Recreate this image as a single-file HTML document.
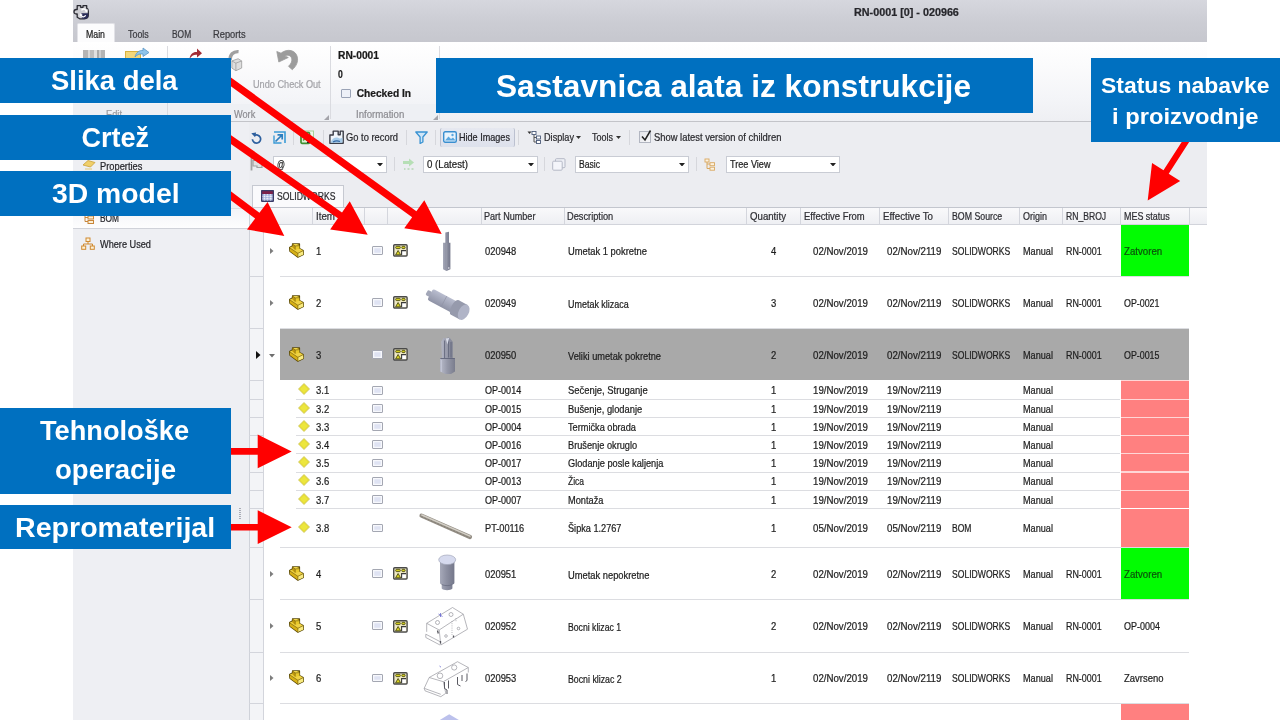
<!DOCTYPE html>
<html><head><meta charset="utf-8"><title>Sastavnica alata iz konstrukcije</title>
<style>
html,body{margin:0;padding:0;background:#fff;}
body{width:1280px;height:720px;overflow:hidden;position:relative;font-family:"Liberation Sans",sans-serif;}
#pg{position:absolute;left:0;top:0;width:1280px;height:720px;overflow:hidden;background:#fff;will-change:transform;}
#pg div,#pg span,#pg svg{position:absolute;}
.t{white-space:nowrap;transform-origin:0 50%;-webkit-text-stroke:.22px;}
.b{-webkit-text-stroke:0;}
.bl{background:#0070c0;}
.ln{background:#dcdde1;}
</style></head><body><div id="pg">

<div style="left:73px;top:0px;width:1134px;height:720px;background:#ecedf1;"></div>
<div style="left:73px;top:0px;width:1134px;height:42.4px;background:linear-gradient(#d6d7de,#cccdd4 50%,#c6c7ce);"></div>
<div style="left:73px;top:41.6px;width:1134px;height:1px;background:#b4b5bc;"></div>
<svg style="left:73px;top:3px;" width="17" height="17" viewBox="0 0 17 17"><path d="M4.200 2.600h3.500v1.700h2.300v-1.700h3.700v2.600c1.300.4 1.600 1.600 1.600 3v4c0 2.300-1.600 3.300-4 3.600h-4.600l-2.500-1.600v-3.200h-.9c-1.600 0-2.300-.9-2.300-2.200s.7-2.300 2.300-2.300h.9z" fill="#cdcdd2" stroke="#2b2b33" stroke-width="1.300" stroke-linejoin="round"/><path d="M8.500 10.200h6.700v3c0 1.700-1.400 2.400-3.400 2.600h-2.300c-1-1.500-1.400-3.600-1-5.600z" fill="#2a2c58"/><path d="M8 7.200a3 3 0 0 1 5.400-.3l1.300-.6-.3 3.200-3-1.600 1-.5a2 2 0 0 0-3.200.300z" fill="#fff"/><path d="M13.200 12.600a3 3 0 0 1-5.400.3l-1.200.7.300-3.400 3 1.700-1.100.5a2 2 0 0 0 3.300-.300z" fill="#fff"/></svg>
<span class="t" style="left:853.50px;top:5.87px;font-size:10.2px;line-height:13px;color:#26262b;font-weight:bold;transform:scaleX(1.0582);">RN-0001 [0] - 020966</span>
<div style="left:76.5px;top:23.2px;width:38px;height:20px;background:#fcfcfd;border:1px solid #e2e2e7;border-bottom:none;box-sizing:border-box;border-radius:2px 2px 0 0;"></div>
<span class="t" style="left:85.70px;top:27.97px;font-size:10.2px;line-height:13px;color:#1c1c1c;transform:scaleX(0.8594);">Main</span>
<span class="t" style="left:127.90px;top:27.97px;font-size:10.2px;line-height:13px;color:#3a3a3f;transform:scaleX(0.8735);">Tools</span>
<span class="t" style="left:171.60px;top:27.97px;font-size:10.2px;line-height:13px;color:#3a3a3f;transform:scaleX(0.8264);">BOM</span>
<span class="t" style="left:213.40px;top:27.97px;font-size:10.2px;line-height:13px;color:#3a3a3f;transform:scaleX(0.9128);">Reports</span>
<div style="left:73px;top:42.4px;width:1134px;height:79px;background:linear-gradient(#ffffff,#fbfbfc 30%,#f4f5f8 70%,#eeeff3);"></div>
<div style="left:73px;top:104px;width:366px;height:17px;background:#eef0f4;"></div>
<div style="left:73px;top:120.5px;width:1134px;height:1px;background:#c3c4c9;"></div>
<div style="left:167.4px;top:46px;width:1px;height:73px;background:#dadbe0;"></div>
<div style="left:330px;top:46px;width:1px;height:73px;background:#dadbe0;"></div>
<div style="left:439px;top:46px;width:1px;height:73px;background:#dadbe0;"></div>
<div style="left:82.5px;top:49.5px;width:22.5px;height:16px;background:linear-gradient(90deg,#b4b4b4 0,#b4b4b4 22%,#d9d9d9 22%,#d9d9d9 30%,#bdbdbd 30%,#bdbdbd 48%,#e0e0e0 48%,#e0e0e0 62%,#a9a9a9 62%,#a9a9a9 72%,#cfcfcf 72%,#cfcfcf 80%,#b4b4b4 80%);"></div>
<div style="left:125px;top:51px;width:16px;height:12px;background:#f3d77a;border:1px solid #d9b23e;box-sizing:border-box;"></div>
<svg style="left:134px;top:47px;" width="16" height="12" viewBox="0 0 16 12"><path d="M1 10c1-5 5-7 8-6.5V1l6 4.5-6 4V7c-3-.5-6 .5-8 3z" fill="#8fc4ea" stroke="#5b97c7" stroke-width=".8"/></svg>
<svg style="left:188px;top:47px;" width="15" height="14" viewBox="0 0 15 14"><path d="M1.5 12c.5-5 4-7.5 7.5-7V1.5l5 4.7-5 4.3V7.8c-3-.4-5.6 1-7.500 4.200z" fill="#a32c34"/></svg>
<svg style="left:226.5px;top:47.8px;" width="16" height="25" viewBox="0 0 18 28"><path d="M3.500 14c-.5-6.500 3.500-10.500 9.500-10" fill="none" stroke="#a0a0a0" stroke-width="3.800"/><path d="M5.500 14.500l7-2.500 4 2.500v8l-6.500 3-4.500-3z" fill="#dedede" stroke="#9c9c9c" stroke-width=".9"/><path d="M5.500 14.500l4.500 2.500 6.500-2.500M10 17v8.500" fill="none" stroke="#9c9c9c" stroke-width=".9"/></svg>
<svg style="left:276px;top:49px;" width="24" height="22" viewBox="0 0 24 22"><path d="M.800 2.500l2 10.500 9.500-4.500-3.500-1.600c2.600-1.600 6.400-.6 7 3 .4 2.700-1 5.200-3.300 7.400l3.800 3.400c4.200-3.600 6-8.200 5-12.600C20 1.200 11.500-1 5 4.200z" fill="#9c9c9c" stroke="#9c9c9c" stroke-width=".800" stroke-linejoin="round"/></svg>
<span class="t" style="left:253.20px;top:77.87px;font-size:10.2px;line-height:13px;color:#a3a3a8;transform:scaleX(0.8985);">Undo Check Out</span>
<span class="t" style="left:105.50px;top:107.67px;font-size:10.2px;line-height:13px;color:#9a9a9e;transform:scaleX(0.9103);">Edit</span>
<span class="t" style="left:233.70px;top:107.67px;font-size:10.2px;line-height:13px;color:#8d8d92;transform:scaleX(0.9021);">Work</span>
<span class="t" style="left:355.70px;top:107.57px;font-size:10.2px;line-height:13px;color:#8d8d92;transform:scaleX(0.9466);">Information</span>
<svg style="left:161px;top:114.5px;" width="5" height="5" viewBox="0 0 5 5"><path d="M5 0v5H0z" fill="#a4a4aa"/></svg>
<svg style="left:323.5px;top:114.5px;" width="5" height="5" viewBox="0 0 5 5"><path d="M5 0v5H0z" fill="#a4a4aa"/></svg>
<svg style="left:433px;top:114.5px;" width="5" height="5" viewBox="0 0 5 5"><path d="M5 0v5H0z" fill="#a4a4aa"/></svg>
<span class="t" style="left:338.00px;top:48.97px;font-size:10.2px;line-height:13px;color:#1a1a1a;font-weight:bold;transform:scaleX(1.0044);">RN-0001</span>
<span class="t" style="left:338.00px;top:67.67px;font-size:10.2px;line-height:13px;color:#1a1a1a;font-weight:bold;transform:scaleX(0.8461);">0</span>
<div style="left:340.5px;top:88.8px;width:10px;height:8.8px;background:#eef1f8;border:1px solid #9aa3b6;box-sizing:border-box;border-radius:1px;"></div>
<span class="t" style="left:356.70px;top:87.27px;font-size:10.2px;line-height:13px;color:#1a1a1a;font-weight:bold;">Checked In</span>
<svg style="left:250.5px;top:131.5px;" width="11" height="12" viewBox="0 0 11 12"><path d="M3.200 3.600A4.100 4.100 0 1 1 1.400 7.200" fill="none" stroke="#2d5f9e" stroke-width="1.7"/><path d="M0.300 1.200l4.800-.6-1 4.600z" fill="#2d5f9e"/></svg>
<svg style="left:272.5px;top:131px;" width="13" height="13" viewBox="0 0 13 13"><path d="M1 1h11v11" fill="none" stroke="#3a9bd6" stroke-width="1.6"/><path d="M1 4.500v7.500h7.500" fill="none" stroke="#3a9bd6" stroke-width="1.4"/><path d="M2.500 10.500l6-6M4.500 3.800h4.700v4.700" fill="none" stroke="#2b7fc0" stroke-width="1.7"/></svg>
<div style="left:293px;top:129.5px;width:1px;height:15px;background:#d6d7dc;"></div>
<svg style="left:300px;top:129.5px;" width="15" height="15" viewBox="0 0 15 15"><rect x="4.500" y="1" width="9" height="8.500" fill="#eef6ea" stroke="#a8d09a" stroke-width="1"/><rect x="1" y="2.500" width="8.500" height="10.800" rx="1" fill="#dff0d6" stroke="#3f8f32" stroke-width="1.700"/><path d="M3.200 5.500l4 5M7.200 5.500l-4 5" stroke="#4d9a3e" stroke-width="1.300"/><rect x="7" y="11.500" width="3" height="1.500" fill="#222"/></svg>
<div style="left:323px;top:129.5px;width:1px;height:15px;background:#d6d7dc;"></div>
<svg style="left:329px;top:129.5px;" width="15" height="14.5" viewBox="0 0 15 14.5"><path d="M.900 13.300v-8.300h3.300v-3.900h5v3.600h2v-3.600h3v12.200z" fill="#f1f6fb" stroke="#3a3c46" stroke-width="1.400" stroke-linejoin="round"/><path d="M1.500 12.800c1.500-4.500 5-6.200 8-4.800 1.600.8 2.500 1 3.900-.5v5.300z" fill="#a9cdea"/><path d="M4 12c2-1.200 4.500-1.500 7-.5" stroke="#2f66a3" stroke-width="1.300" fill="none"/></svg>
<span class="t" style="left:346.00px;top:131.27px;font-size:10.2px;line-height:13px;color:#2a2a2e;transform:scaleX(0.9172);">Go to record</span>
<div style="left:406px;top:129.5px;width:1px;height:15px;background:#d6d7dc;"></div>
<svg style="left:414.5px;top:131px;" width="13" height="13" viewBox="0 0 13 13"><path d="M.8 1h11.400l-4.300 5v5l-2.800 1.500v-6.500z" fill="#cfe6f8" stroke="#3a93d2" stroke-width="1.3" stroke-linejoin="round"/></svg>
<div style="left:435px;top:129.5px;width:1px;height:15px;background:#d6d7dc;"></div>
<div style="left:439.5px;top:127.5px;width:75px;height:19px;background:linear-gradient(#e6e8f0,#dde1ec);border-left:1px solid #bcc1d0;border-right:1px solid #bcc1d0;box-sizing:border-box;border-radius:2px;"></div>
<svg style="left:442.5px;top:131px;" width="14" height="12" viewBox="0 0 14 12"><rect x=".7" y=".7" width="12.600" height="10.600" rx="1.500" fill="#e8f3fc" stroke="#3a8fd0" stroke-width="1.4"/><path d="M2 9.500l3.500-4 2.500 2.500 2-1.500 2.500 3z" fill="#5aa7e0"/><circle cx="9.500" cy="4" r="1.200" fill="#5aa7e0"/></svg>
<span class="t" style="left:459.00px;top:131.27px;font-size:10.2px;line-height:13px;color:#26262b;transform:scaleX(0.8907);">Hide Images</span>
<div style="left:517.5px;top:129.5px;width:1px;height:15px;background:#d6d7dc;"></div>
<svg style="left:526.5px;top:129.5px;" width="15" height="15" viewBox="0 0 15 15"><path d="M.5 1.500h4l-2 2.500z" fill="#333"/><path d="M7 3.500v8.500h3M7 7.500h3" fill="none" stroke="#555" stroke-width="1"/><rect x="5" y="1.500" width="4" height="3" fill="#fff" stroke="#4a5a78" stroke-width=".9"/><rect x="9.500" y="6" width="4" height="3" fill="#fff" stroke="#4a5a78" stroke-width=".9"/><rect x="9.500" y="10.500" width="4" height="3" fill="#fff" stroke="#4a5a78" stroke-width=".9"/></svg>
<span class="t" style="left:544.00px;top:131.27px;font-size:10.2px;line-height:13px;color:#2a2a2e;transform:scaleX(0.8970);">Display</span>
<svg style="left:576.3px;top:136px;" width="5" height="3" viewBox="0 0 5 3"><path d="M0 0h5l-2.500 3z" fill="#333"/></svg>
<span class="t" style="left:592.00px;top:131.27px;font-size:10.2px;line-height:13px;color:#2a2a2e;transform:scaleX(0.8819);">Tools</span>
<svg style="left:615.5px;top:136px;" width="5" height="3" viewBox="0 0 5 3"><path d="M0 0h5l-2.500 3z" fill="#333"/></svg>
<div style="left:629px;top:129.5px;width:1px;height:15px;background:#d6d7dc;"></div>
<div style="left:639px;top:131px;width:12px;height:12px;background:linear-gradient(135deg,#e4e5ea,#f7f7f9);border:1px solid #b2b6c1;box-sizing:border-box;"></div>
<svg style="left:639px;top:129px;" width="14" height="14" viewBox="0 0 14 14"><path d="M3 7.500l3 3.500 5.500-9.500" fill="none" stroke="#222" stroke-width="1.500"/></svg>
<span class="t" style="left:654.00px;top:131.27px;font-size:10.2px;line-height:13px;color:#2a2a2e;transform:scaleX(0.9217);">Show latest version of children</span>
<svg style="left:249.5px;top:157px;" width="14" height="14" viewBox="0 0 14 14"><path d="M1.500 .500v13" stroke="#a2a2a2" stroke-width="1.800"/><path d="M3 3.500h4.500v1.500h4.500v5.500h-5v-1.500h-4z" fill="#e0e0e0" stroke="#a0a0a0" stroke-width="1.200"/></svg>
<div style="left:272.5px;top:155.7px;width:114.5px;height:17px;background:#fff;border:1px solid #c9ccd4;box-sizing:border-box;"></div>
<span class="t" style="left:276.50px;top:157.97px;font-size:10.2px;line-height:13px;color:#1e1e1e;transform:scaleX(0.7726);">@</span>
<svg style="left:377px;top:162.7px;" width="6" height="3.5" viewBox="0 0 6 3.5"><path d="M0 0h6l-3 3.500z" fill="#222"/></svg>
<div style="left:393.5px;top:157px;width:1px;height:14px;background:#d6d7dc;"></div>
<svg style="left:402px;top:157px;" width="14" height="14" viewBox="0 0 14 14"><path d="M1 4h6v-2.500l5 4-5 4v-2.500h-6z" fill="#a9dba6" opacity=".8"/><path d="M2 12h1.500M5.500 12h2M9.500 12h2" stroke="#b4d6b4" stroke-width="1.400"/></svg>
<div style="left:423px;top:155.7px;width:114.5px;height:17px;background:#fff;border:1px solid #c9ccd4;box-sizing:border-box;"></div>
<span class="t" style="left:427.00px;top:157.97px;font-size:10.2px;line-height:13px;color:#1e1e1e;transform:scaleX(0.9516);">0 (Latest)</span>
<svg style="left:527.5px;top:162.7px;" width="6" height="3.5" viewBox="0 0 6 3.5"><path d="M0 0h6l-3 3.500z" fill="#222"/></svg>
<div style="left:543.5px;top:157px;width:1px;height:14px;background:#d6d7dc;"></div>
<svg style="left:552px;top:157.5px;" width="14" height="13" viewBox="0 0 14 13"><rect x="3.500" y=".7" width="9.500" height="9" rx="1" fill="#eef0f6" stroke="#b4b8c6" stroke-width="1"/><rect x=".7" y="3.200" width="9.500" height="9" rx="1" fill="#f4f5fa" stroke="#b4b8c6" stroke-width="1"/></svg>
<div style="left:574.5px;top:155.7px;width:114.5px;height:17px;background:#fff;border:1px solid #c9ccd4;box-sizing:border-box;"></div>
<span class="t" style="left:578.50px;top:157.97px;font-size:10.2px;line-height:13px;color:#1e1e1e;transform:scaleX(0.8419);">Basic</span>
<svg style="left:679px;top:162.7px;" width="6" height="3.5" viewBox="0 0 6 3.5"><path d="M0 0h6l-3 3.500z" fill="#222"/></svg>
<div style="left:696px;top:157px;width:1px;height:14px;background:#d6d7dc;"></div>
<svg style="left:704px;top:157.5px;" width="12" height="13" viewBox="0 0 12 13"><path d="M3 3.500v7h3M3 6h3" fill="none" stroke="#d9a860" stroke-width="1"/><rect x="1" y="1" width="4" height="3" fill="#fdf3e0" stroke="#d9a860" stroke-width=".9"/><rect x="6" y="4.700" width="4.500" height="3" fill="#fdf3e0" stroke="#d9a860" stroke-width=".9"/><rect x="6" y="9.200" width="4.500" height="3" fill="#fdf3e0" stroke="#d9a860" stroke-width=".9"/></svg>
<div style="left:725.5px;top:155.7px;width:114.5px;height:17px;background:#fff;border:1px solid #c9ccd4;box-sizing:border-box;"></div>
<span class="t" style="left:729.50px;top:157.97px;font-size:10.2px;line-height:13px;color:#1e1e1e;transform:scaleX(0.8930);">Tree View</span>
<svg style="left:830px;top:162.7px;" width="6" height="3.5" viewBox="0 0 6 3.5"><path d="M0 0h6l-3 3.500z" fill="#222"/></svg>
<div style="left:73px;top:121.5px;width:176px;height:598.5px;background:#eeeff3;"></div>
<div style="left:248.5px;top:207px;width:1px;height:513px;background:#d2d4da;"></div>
<div style="left:73px;top:208px;width:175.5px;height:20.8px;background:linear-gradient(#f3f4f7,#fdfdfe);border-top:1px solid #dcdee4;border-bottom:1px solid #d0d2d9;box-sizing:border-box;"></div>
<svg style="left:82px;top:158px;" width="14" height="13" viewBox="0 0 14 13"><path d="M1 7l5-4.500 7 2-4.500 4.500z" fill="#f0cf6a" stroke="#c9a13a" stroke-width=".8"/><path d="M3 10h7v2h-7z" fill="#e8ddb5"/></svg>
<span class="t" style="left:99.70px;top:159.77px;font-size:10.2px;line-height:13px;color:#26262b;transform:scaleX(0.9142);">Properties</span>
<svg style="left:82px;top:211px;" width="13" height="13" viewBox="0 0 13 13"><path d="M3 3.500v7h3M3 6.500h3" fill="none" stroke="#c8863a" stroke-width="1"/><rect x="1" y="1" width="5" height="3.500" fill="#fdf0d6" stroke="#c8863a" stroke-width="1"/><rect x="6" y="5" width="5.500" height="3" fill="#fdf0d6" stroke="#c8863a" stroke-width="1"/><rect x="6" y="9.500" width="5.500" height="3" fill="#fdf0d6" stroke="#c8863a" stroke-width="1"/></svg>
<span class="t" style="left:99.70px;top:211.67px;font-size:10.2px;line-height:13px;color:#26262b;transform:scaleX(0.8178);">BOM</span>
<svg style="left:81px;top:237px;" width="14" height="13" viewBox="0 0 14 13"><path d="M7 4v3M2.500 9.500v-2.500h9v2.500" fill="none" stroke="#d08a30" stroke-width="1"/><rect x="5" y="1" width="4" height="3.500" fill="#fdf0d6" stroke="#d08a30" stroke-width="1"/><rect x=".7" y="9" width="4" height="3.300" fill="#fdf0d6" stroke="#d08a30" stroke-width="1"/><rect x="9.300" y="9" width="4" height="3.300" fill="#fdf0d6" stroke="#d08a30" stroke-width="1"/></svg>
<span class="t" style="left:99.70px;top:237.97px;font-size:10.2px;line-height:13px;color:#26262b;transform:scaleX(0.8997);">Where Used</span>
<div style="left:239px;top:508px;width:2px;height:1px;background:#a9acb6;"></div>
<div style="left:239px;top:510px;width:2px;height:1px;background:#a9acb6;"></div>
<div style="left:239px;top:512px;width:2px;height:1px;background:#a9acb6;"></div>
<div style="left:239px;top:514px;width:2px;height:1px;background:#a9acb6;"></div>
<div style="left:239px;top:516px;width:2px;height:1px;background:#a9acb6;"></div>
<div style="left:239px;top:518px;width:2px;height:1px;background:#a9acb6;"></div>
<div style="left:252px;top:185.2px;width:91.8px;height:22.5px;background:#fafafc;border:1px solid #c6c9d1;border-bottom:none;box-sizing:border-box;"></div>
<svg style="left:261.2px;top:189.8px;" width="13" height="12" viewBox="0 0 13 12"><rect x=".600" y=".600" width="11.800" height="10.800" rx=".800" fill="#a9b6de" stroke="#3c3c68" stroke-width="1.200"/><rect x=".600" y=".600" width="11.800" height="3.400" fill="#7c2049"/><path d="M3.500 4.200v7M6.500 4.200v7M9.500 4.200v7M1.200 6.400h10.600M1.200 8.800h10.600" stroke="#f4f6fc" stroke-width=".800" stroke-dasharray="1.200 .600"/><rect x=".600" y=".600" width="11.800" height="10.800" rx=".800" fill="none" stroke="#3c3c68" stroke-width="1.200"/></svg>
<span class="t" style="left:277.00px;top:190.07px;font-size:10.2px;line-height:13px;color:#2a2a2e;transform:scaleX(0.8461);">SOLIDWORKS</span>
<div style="left:249px;top:207px;width:958px;height:513px;background:#fff;"></div>
<div style="left:249px;top:207px;width:958px;height:17.5px;background:linear-gradient(#f9f9fb,#eeeff3);border-top:1px solid #c3c6ce;border-bottom:1px solid #d2d4db;box-sizing:border-box;"></div>
<div style="left:312px;top:208px;width:1px;height:15.5px;background:#d4d6dd;"></div>
<div style="left:363.5px;top:208px;width:1px;height:15.5px;background:#d4d6dd;"></div>
<div style="left:387px;top:208px;width:1px;height:15.5px;background:#d4d6dd;"></div>
<div style="left:480.5px;top:208px;width:1px;height:15.5px;background:#d4d6dd;"></div>
<div style="left:563.5px;top:208px;width:1px;height:15.5px;background:#d4d6dd;"></div>
<div style="left:745.5px;top:208px;width:1px;height:15.5px;background:#d4d6dd;"></div>
<div style="left:800px;top:208px;width:1px;height:15.5px;background:#d4d6dd;"></div>
<div style="left:879px;top:208px;width:1px;height:15.5px;background:#d4d6dd;"></div>
<div style="left:947.5px;top:208px;width:1px;height:15.5px;background:#d4d6dd;"></div>
<div style="left:1018.5px;top:208px;width:1px;height:15.5px;background:#d4d6dd;"></div>
<div style="left:1061.5px;top:208px;width:1px;height:15.5px;background:#d4d6dd;"></div>
<div style="left:1120px;top:208px;width:1px;height:15.5px;background:#d4d6dd;"></div>
<div style="left:1189px;top:208px;width:1px;height:15.5px;background:#d4d6dd;"></div>
<span class="t" style="left:316.00px;top:209.57px;font-size:10.2px;line-height:13px;color:#2e2e33;transform:scaleX(0.9578);">Item</span>
<span class="t" style="left:484.20px;top:209.57px;font-size:10.2px;line-height:13px;color:#2e2e33;transform:scaleX(0.8907);">Part Number</span>
<span class="t" style="left:566.70px;top:209.57px;font-size:10.2px;line-height:13px;color:#2e2e33;transform:scaleX(0.9075);">Description</span>
<span class="t" style="left:749.50px;top:209.57px;font-size:10.2px;line-height:13px;color:#2e2e33;transform:scaleX(0.9477);">Quantity</span>
<span class="t" style="left:804.20px;top:209.57px;font-size:10.2px;line-height:13px;color:#2e2e33;transform:scaleX(0.9273);">Effective From</span>
<span class="t" style="left:883.20px;top:209.57px;font-size:10.2px;line-height:13px;color:#2e2e33;transform:scaleX(0.9550);">Effective To</span>
<span class="t" style="left:951.70px;top:209.57px;font-size:10.2px;line-height:13px;color:#2e2e33;transform:scaleX(0.8615);">BOM Source</span>
<span class="t" style="left:1023.00px;top:209.57px;font-size:10.2px;line-height:13px;color:#2e2e33;transform:scaleX(0.8821);">Origin</span>
<span class="t" style="left:1065.50px;top:209.57px;font-size:10.2px;line-height:13px;color:#2e2e33;transform:scaleX(0.8444);">RN_BROJ</span>
<span class="t" style="left:1123.70px;top:209.57px;font-size:10.2px;line-height:13px;color:#2e2e33;transform:scaleX(0.8782);">MES status</span>
<div style="left:249px;top:224.5px;width:14.5px;height:495.5px;background:#f3f4f7;border-left:1px solid #cfd2d9;border-right:1px solid #d3d5dc;box-sizing:border-box;"></div>
<div style="left:249px;top:207px;width:14.5px;height:17.5px;background:#f1f2f6;border:1px solid #cfd2d9;box-sizing:border-box;"></div>
<div style="left:1120.8px;top:224.5px;width:68.6px;height:51.2px;background:#02fc02;"></div>
<div class="ln" style="left:280px;top:275.7px;width:909.4px;height:1px;"></div>
<div style="left:249px;top:275.7px;width:14.5px;height:1px;background:#d3d5dc;"></div>
<svg style="left:270px;top:247.85px;" width="4" height="6" viewBox="0 0 4 6"><path d="M0 0v6l3.500-3z" fill="#7d7d7d"/></svg>
<svg style="left:288.5px;top:242.55px;" width="15" height="15" viewBox="0 0 15 15"><path d="M3.500 .900h7v4.600l3.700 2 .3 4-5.600 2.700-8-6-.400-3.700 3-1.600z" fill="#e3bd1a" stroke="#5a4a0a" stroke-width="1.200" stroke-linejoin="round"/><path d="M.700 4.700l2.800-1.500v1.500l2.700 2 4.300-1.200 3.500 2-5.200 2.700z" fill="#efd244"/><path d="M3.600 1.100h4.300l2.500 1.600-4.200.2z" fill="#f2d84c"/><path d="M3.600 1.100l2.600 1.800v3.700l-2.600-2z" fill="#c29a0e"/><path d="M6.200 2.900l4.200-.2v2.800l-4.200 1.100z" fill="#e9ca2c"/><path d="M8.900 10.300l5.200-2.600.3 3.700-5.500 2.700z" fill="#f8ea80"/><path d="M.800 4.900l8.100 5.400v3.800l-7.900-5.900z" fill="#d7b016"/><path d="M3.600 1.100l2.600 1.800v3.700M.800 4.900l8.100 5.400 5.200-2.600M8.900 10.300v3.800M6.200 2.900l4.200-.2" fill="none" stroke="#7d6610" stroke-width=".700"/></svg>
<div style="left:371.9px;top:245.95px;width:10.7px;height:8.9px;background:#dfe3f3;border:1px solid #a4a7b2;box-shadow:inset 0 0 0 1.300px #f7f8fc;box-sizing:border-box;border-radius:1px;"></div>
<svg style="left:393.2px;top:244.15px;" width="15" height="13" viewBox="0 0 15 13"><rect x=".700" y=".700" width="13.400" height="11.300" rx="1" fill="#efe9c4" stroke="#4a4a4a" stroke-width="1.400"/><rect x="2.700" y="2.300" width="4.600" height="2.300" rx="1" fill="#d9d21e" stroke="#4d4d12" stroke-width=".900"/><rect x="8.800" y="2.300" width="3.300" height="2.300" rx="1" fill="#d9d21e" stroke="#4d4d12" stroke-width=".900"/><path d="M2.600 10.800l2.500-4.300 2.500 4.300z" fill="#d9d21e" stroke="#4d4d12" stroke-width=".900" stroke-linejoin="round"/><rect x="8.800" y="6.800" width="4" height="4.300" fill="#fff"/><path d="M8.600 11v-4.400h4.400" fill="none" stroke="#3a3a3a" stroke-width="1.100"/></svg>
<span class="t" style="left:316.00px;top:244.52px;font-size:10.2px;line-height:13px;color:#1e1e1e;transform:scaleX(0.9300);">1</span>
<span class="t" style="left:484.50px;top:244.52px;font-size:10.2px;line-height:13px;color:#1e1e1e;transform:scaleX(0.9196);">020948</span>
<span class="t" style="left:567.70px;top:245.42px;font-size:10.2px;line-height:13px;color:#1e1e1e;transform:scaleX(0.9179);">Umetak 1 pokretne</span>
<span class="t" style="left:770.86px;top:244.52px;font-size:10.2px;line-height:13px;color:#1e1e1e;transform:scaleX(0.9300);">4</span>
<span class="t" style="left:812.50px;top:244.52px;font-size:10.2px;line-height:13px;color:#1e1e1e;transform:scaleX(0.9508);">02/Nov/2019</span>
<span class="t" style="left:886.75px;top:244.52px;font-size:10.2px;line-height:13px;color:#1e1e1e;transform:scaleX(0.9547);">02/Nov/2119</span>
<span class="t" style="left:951.70px;top:244.52px;font-size:10.2px;line-height:13px;color:#1e1e1e;transform:scaleX(0.8432);">SOLIDWORKS</span>
<span class="t" style="left:1023.00px;top:244.52px;font-size:10.2px;line-height:13px;color:#1e1e1e;transform:scaleX(0.8968);">Manual</span>
<span class="t" style="left:1065.50px;top:244.52px;font-size:10.2px;line-height:13px;color:#1e1e1e;transform:scaleX(0.8746);">RN-0001</span>
<span class="t" style="left:1123.70px;top:244.52px;font-size:10.2px;line-height:13px;color:#0b520b;transform:scaleX(0.9503);">Zatvoren</span>
<div class="ln" style="left:280px;top:328.3px;width:909.4px;height:1px;"></div>
<div style="left:249px;top:328.3px;width:14.5px;height:1px;background:#d3d5dc;"></div>
<svg style="left:270px;top:300px;" width="4" height="6" viewBox="0 0 4 6"><path d="M0 0v6l3.500-3z" fill="#7d7d7d"/></svg>
<svg style="left:288.5px;top:294.7px;" width="15" height="15" viewBox="0 0 15 15"><path d="M3.500 .900h7v4.600l3.700 2 .3 4-5.600 2.700-8-6-.400-3.700 3-1.600z" fill="#e3bd1a" stroke="#5a4a0a" stroke-width="1.200" stroke-linejoin="round"/><path d="M.700 4.700l2.800-1.500v1.500l2.700 2 4.300-1.200 3.500 2-5.200 2.700z" fill="#efd244"/><path d="M3.600 1.100h4.300l2.500 1.600-4.200.2z" fill="#f2d84c"/><path d="M3.600 1.100l2.600 1.800v3.700l-2.600-2z" fill="#c29a0e"/><path d="M6.200 2.900l4.200-.2v2.800l-4.200 1.100z" fill="#e9ca2c"/><path d="M8.900 10.300l5.200-2.600.3 3.700-5.500 2.700z" fill="#f8ea80"/><path d="M.800 4.900l8.100 5.400v3.800l-7.900-5.900z" fill="#d7b016"/><path d="M3.600 1.100l2.600 1.800v3.700M.800 4.900l8.100 5.400 5.200-2.600M8.900 10.300v3.800M6.200 2.900l4.200-.2" fill="none" stroke="#7d6610" stroke-width=".700"/></svg>
<div style="left:371.9px;top:298.1px;width:10.7px;height:8.9px;background:#dfe3f3;border:1px solid #a4a7b2;box-shadow:inset 0 0 0 1.300px #f7f8fc;box-sizing:border-box;border-radius:1px;"></div>
<svg style="left:393.2px;top:296.3px;" width="15" height="13" viewBox="0 0 15 13"><rect x=".700" y=".700" width="13.400" height="11.300" rx="1" fill="#efe9c4" stroke="#4a4a4a" stroke-width="1.400"/><rect x="2.700" y="2.300" width="4.600" height="2.300" rx="1" fill="#d9d21e" stroke="#4d4d12" stroke-width=".900"/><rect x="8.800" y="2.300" width="3.300" height="2.300" rx="1" fill="#d9d21e" stroke="#4d4d12" stroke-width=".900"/><path d="M2.600 10.800l2.500-4.300 2.500 4.300z" fill="#d9d21e" stroke="#4d4d12" stroke-width=".900" stroke-linejoin="round"/><rect x="8.800" y="6.800" width="4" height="4.300" fill="#fff"/><path d="M8.600 11v-4.400h4.400" fill="none" stroke="#3a3a3a" stroke-width="1.100"/></svg>
<span class="t" style="left:316.00px;top:296.67px;font-size:10.2px;line-height:13px;color:#1e1e1e;transform:scaleX(0.9300);">2</span>
<span class="t" style="left:484.50px;top:296.67px;font-size:10.2px;line-height:13px;color:#1e1e1e;transform:scaleX(0.9196);">020949</span>
<span class="t" style="left:567.70px;top:297.57px;font-size:10.2px;line-height:13px;color:#1e1e1e;transform:scaleX(0.8792);">Umetak klizaca</span>
<span class="t" style="left:770.86px;top:296.67px;font-size:10.2px;line-height:13px;color:#1e1e1e;transform:scaleX(0.9300);">3</span>
<span class="t" style="left:812.50px;top:296.67px;font-size:10.2px;line-height:13px;color:#1e1e1e;transform:scaleX(0.9508);">02/Nov/2019</span>
<span class="t" style="left:886.75px;top:296.67px;font-size:10.2px;line-height:13px;color:#1e1e1e;transform:scaleX(0.9547);">02/Nov/2119</span>
<span class="t" style="left:951.70px;top:296.67px;font-size:10.2px;line-height:13px;color:#1e1e1e;transform:scaleX(0.8432);">SOLIDWORKS</span>
<span class="t" style="left:1023.00px;top:296.67px;font-size:10.2px;line-height:13px;color:#1e1e1e;transform:scaleX(0.8968);">Manual</span>
<span class="t" style="left:1065.50px;top:296.67px;font-size:10.2px;line-height:13px;color:#1e1e1e;transform:scaleX(0.8746);">RN-0001</span>
<span class="t" style="left:1123.70px;top:296.67px;font-size:10.2px;line-height:13px;color:#1e1e1e;transform:scaleX(0.8696);">OP-0021</span>
<div style="left:280px;top:328.8px;width:909.4px;height:51.3px;background:#a9a9a9;"></div>
<div style="left:249px;top:379.6px;width:14.5px;height:1px;background:#d3d5dc;"></div>
<svg style="left:268.5px;top:353.95px;" width="6" height="4" viewBox="0 0 6 4"><path d="M0 0h6l-3 3.500z" fill="#6e6e6e"/></svg>
<svg style="left:288.5px;top:346.65px;" width="15" height="15" viewBox="0 0 15 15"><path d="M3.500 .900h7v4.600l3.700 2 .3 4-5.600 2.700-8-6-.400-3.700 3-1.600z" fill="#e3bd1a" stroke="#5a4a0a" stroke-width="1.200" stroke-linejoin="round"/><path d="M.700 4.700l2.800-1.500v1.500l2.700 2 4.300-1.200 3.500 2-5.200 2.700z" fill="#efd244"/><path d="M3.600 1.100h4.300l2.500 1.600-4.200.2z" fill="#f2d84c"/><path d="M3.600 1.100l2.600 1.800v3.700l-2.600-2z" fill="#c29a0e"/><path d="M6.200 2.900l4.200-.2v2.800l-4.200 1.100z" fill="#e9ca2c"/><path d="M8.900 10.300l5.200-2.600.3 3.700-5.500 2.700z" fill="#f8ea80"/><path d="M.800 4.900l8.100 5.400v3.800l-7.900-5.900z" fill="#d7b016"/><path d="M3.600 1.100l2.600 1.800v3.700M.800 4.900l8.100 5.400 5.200-2.600M8.900 10.300v3.800M6.200 2.900l4.200-.2" fill="none" stroke="#7d6610" stroke-width=".700"/></svg>
<div style="left:371.9px;top:350.05px;width:10.7px;height:8.9px;background:#dfe3f3;border:1px solid #a4a7b2;box-shadow:inset 0 0 0 1.300px #f7f8fc;box-sizing:border-box;border-radius:1px;"></div>
<svg style="left:393.2px;top:348.25px;" width="15" height="13" viewBox="0 0 15 13"><rect x=".700" y=".700" width="13.400" height="11.300" rx="1" fill="#efe9c4" stroke="#4a4a4a" stroke-width="1.400"/><rect x="2.700" y="2.300" width="4.600" height="2.300" rx="1" fill="#d9d21e" stroke="#4d4d12" stroke-width=".900"/><rect x="8.800" y="2.300" width="3.300" height="2.300" rx="1" fill="#d9d21e" stroke="#4d4d12" stroke-width=".900"/><path d="M2.600 10.800l2.500-4.300 2.500 4.300z" fill="#d9d21e" stroke="#4d4d12" stroke-width=".900" stroke-linejoin="round"/><rect x="8.800" y="6.800" width="4" height="4.300" fill="#fff"/><path d="M8.600 11v-4.400h4.400" fill="none" stroke="#3a3a3a" stroke-width="1.100"/></svg>
<span class="t" style="left:316.00px;top:348.62px;font-size:10.2px;line-height:13px;color:#1e1e1e;transform:scaleX(0.9300);">3</span>
<span class="t" style="left:484.50px;top:348.62px;font-size:10.2px;line-height:13px;color:#1e1e1e;transform:scaleX(0.9196);">020950</span>
<span class="t" style="left:567.70px;top:349.52px;font-size:10.2px;line-height:13px;color:#1e1e1e;transform:scaleX(0.9072);">Veliki umetak pokretne</span>
<span class="t" style="left:770.86px;top:348.62px;font-size:10.2px;line-height:13px;color:#1e1e1e;transform:scaleX(0.9300);">2</span>
<span class="t" style="left:812.50px;top:348.62px;font-size:10.2px;line-height:13px;color:#1e1e1e;transform:scaleX(0.9508);">02/Nov/2019</span>
<span class="t" style="left:886.75px;top:348.62px;font-size:10.2px;line-height:13px;color:#1e1e1e;transform:scaleX(0.9547);">02/Nov/2119</span>
<span class="t" style="left:951.70px;top:348.62px;font-size:10.2px;line-height:13px;color:#1e1e1e;transform:scaleX(0.8432);">SOLIDWORKS</span>
<span class="t" style="left:1023.00px;top:348.62px;font-size:10.2px;line-height:13px;color:#1e1e1e;transform:scaleX(0.8968);">Manual</span>
<span class="t" style="left:1065.50px;top:348.62px;font-size:10.2px;line-height:13px;color:#1e1e1e;transform:scaleX(0.8746);">RN-0001</span>
<span class="t" style="left:1123.70px;top:348.62px;font-size:10.2px;line-height:13px;color:#1e1e1e;transform:scaleX(0.8696);">OP-0015</span>
<svg style="left:255.5px;top:351px;" width="5" height="8" viewBox="0 0 5 8"><path d="M0 0v8l4.500-4z" fill="#111"/></svg>
<div style="left:1120.8px;top:380.4px;width:68.6px;height:128.1px;background:#ffd6d6;"></div>
<div style="left:1120.8px;top:380.9px;width:68.6px;height:17.9px;background:#ff8080;"></div>
<div class="ln" style="left:295.5px;top:398.8px;width:824.5px;height:1px;"></div>
<div style="left:249px;top:398.8px;width:14.5px;height:1px;background:#d3d5dc;"></div>
<svg style="left:297.5px;top:383.45px;" width="12" height="12" viewBox="0 0 12 12"><path d="M6 .500l5.500 5.500-5.500 5.500-5.500-5.500z" fill="#e6de34" stroke="#cdc55a" stroke-width=".800"/><path d="M6 2.200l3.800 3.800-3.800 3.800-3.800-3.800z" fill="#ece63e"/></svg>
<div style="left:371.9px;top:385.75px;width:10.7px;height:8.9px;background:#dfe3f3;border:1px solid #a4a7b2;box-shadow:inset 0 0 0 1.300px #f7f8fc;box-sizing:border-box;border-radius:1px;"></div>
<span class="t" style="left:316.00px;top:384.32px;font-size:10.2px;line-height:13px;color:#1e1e1e;transform:scaleX(0.9300);">3.1</span>
<span class="t" style="left:484.50px;top:384.32px;font-size:10.2px;line-height:13px;color:#1e1e1e;transform:scaleX(0.8879);">OP-0014</span>
<span class="t" style="left:567.70px;top:384.32px;font-size:10.2px;line-height:13px;color:#1e1e1e;transform:scaleX(0.9253);">Sečenje, Struganje</span>
<span class="t" style="left:770.86px;top:384.32px;font-size:10.2px;line-height:13px;color:#1e1e1e;transform:scaleX(0.9300);">1</span>
<span class="t" style="left:812.50px;top:384.32px;font-size:10.2px;line-height:13px;color:#1e1e1e;transform:scaleX(0.9508);">19/Nov/2019</span>
<span class="t" style="left:886.75px;top:384.32px;font-size:10.2px;line-height:13px;color:#1e1e1e;transform:scaleX(0.9547);">19/Nov/2119</span>
<span class="t" style="left:1023.00px;top:384.32px;font-size:10.2px;line-height:13px;color:#1e1e1e;transform:scaleX(0.8968);">Manual</span>
<div style="left:1120.8px;top:399.8px;width:68.6px;height:17.2px;background:#ff8080;"></div>
<div class="ln" style="left:295.5px;top:417px;width:824.5px;height:1px;"></div>
<div style="left:249px;top:417px;width:14.5px;height:1px;background:#d3d5dc;"></div>
<svg style="left:297.5px;top:401.7px;" width="12" height="12" viewBox="0 0 12 12"><path d="M6 .500l5.500 5.500-5.500 5.500-5.500-5.500z" fill="#e6de34" stroke="#cdc55a" stroke-width=".800"/><path d="M6 2.200l3.800 3.800-3.800 3.800-3.800-3.800z" fill="#ece63e"/></svg>
<div style="left:371.9px;top:404px;width:10.7px;height:8.9px;background:#dfe3f3;border:1px solid #a4a7b2;box-shadow:inset 0 0 0 1.300px #f7f8fc;box-sizing:border-box;border-radius:1px;"></div>
<span class="t" style="left:316.00px;top:402.57px;font-size:10.2px;line-height:13px;color:#1e1e1e;transform:scaleX(0.9300);">3.2</span>
<span class="t" style="left:484.50px;top:402.57px;font-size:10.2px;line-height:13px;color:#1e1e1e;transform:scaleX(0.8879);">OP-0015</span>
<span class="t" style="left:567.70px;top:402.57px;font-size:10.2px;line-height:13px;color:#1e1e1e;transform:scaleX(0.9156);">Bušenje, glodanje</span>
<span class="t" style="left:770.86px;top:402.57px;font-size:10.2px;line-height:13px;color:#1e1e1e;transform:scaleX(0.9300);">1</span>
<span class="t" style="left:812.50px;top:402.57px;font-size:10.2px;line-height:13px;color:#1e1e1e;transform:scaleX(0.9508);">19/Nov/2019</span>
<span class="t" style="left:886.75px;top:402.57px;font-size:10.2px;line-height:13px;color:#1e1e1e;transform:scaleX(0.9547);">19/Nov/2119</span>
<span class="t" style="left:1023.00px;top:402.57px;font-size:10.2px;line-height:13px;color:#1e1e1e;transform:scaleX(0.8968);">Manual</span>
<div style="left:1120.8px;top:418px;width:68.6px;height:17.1px;background:#ff8080;"></div>
<div class="ln" style="left:295.5px;top:435.1px;width:824.5px;height:1px;"></div>
<div style="left:249px;top:435.1px;width:14.5px;height:1px;background:#d3d5dc;"></div>
<svg style="left:297.5px;top:419.85px;" width="12" height="12" viewBox="0 0 12 12"><path d="M6 .500l5.500 5.500-5.500 5.500-5.500-5.500z" fill="#e6de34" stroke="#cdc55a" stroke-width=".800"/><path d="M6 2.200l3.800 3.800-3.800 3.800-3.800-3.800z" fill="#ece63e"/></svg>
<div style="left:371.9px;top:422.15px;width:10.7px;height:8.9px;background:#dfe3f3;border:1px solid #a4a7b2;box-shadow:inset 0 0 0 1.300px #f7f8fc;box-sizing:border-box;border-radius:1px;"></div>
<span class="t" style="left:316.00px;top:420.72px;font-size:10.2px;line-height:13px;color:#1e1e1e;transform:scaleX(0.9300);">3.3</span>
<span class="t" style="left:484.50px;top:420.72px;font-size:10.2px;line-height:13px;color:#1e1e1e;transform:scaleX(0.8879);">OP-0004</span>
<span class="t" style="left:567.70px;top:420.72px;font-size:10.2px;line-height:13px;color:#1e1e1e;transform:scaleX(0.9019);">Termička obrada</span>
<span class="t" style="left:770.86px;top:420.72px;font-size:10.2px;line-height:13px;color:#1e1e1e;transform:scaleX(0.9300);">1</span>
<span class="t" style="left:812.50px;top:420.72px;font-size:10.2px;line-height:13px;color:#1e1e1e;transform:scaleX(0.9508);">19/Nov/2019</span>
<span class="t" style="left:886.75px;top:420.72px;font-size:10.2px;line-height:13px;color:#1e1e1e;transform:scaleX(0.9547);">19/Nov/2119</span>
<span class="t" style="left:1023.00px;top:420.72px;font-size:10.2px;line-height:13px;color:#1e1e1e;transform:scaleX(0.8968);">Manual</span>
<div style="left:1120.8px;top:436.1px;width:68.6px;height:17.2px;background:#ff8080;"></div>
<div class="ln" style="left:295.5px;top:453.3px;width:824.5px;height:1px;"></div>
<div style="left:249px;top:453.3px;width:14.5px;height:1px;background:#d3d5dc;"></div>
<svg style="left:297.5px;top:438px;" width="12" height="12" viewBox="0 0 12 12"><path d="M6 .500l5.500 5.500-5.500 5.500-5.500-5.500z" fill="#e6de34" stroke="#cdc55a" stroke-width=".800"/><path d="M6 2.200l3.800 3.800-3.800 3.800-3.800-3.800z" fill="#ece63e"/></svg>
<div style="left:371.9px;top:440.3px;width:10.7px;height:8.9px;background:#dfe3f3;border:1px solid #a4a7b2;box-shadow:inset 0 0 0 1.300px #f7f8fc;box-sizing:border-box;border-radius:1px;"></div>
<span class="t" style="left:316.00px;top:438.87px;font-size:10.2px;line-height:13px;color:#1e1e1e;transform:scaleX(0.9300);">3.4</span>
<span class="t" style="left:484.50px;top:438.87px;font-size:10.2px;line-height:13px;color:#1e1e1e;transform:scaleX(0.8879);">OP-0016</span>
<span class="t" style="left:567.70px;top:438.87px;font-size:10.2px;line-height:13px;color:#1e1e1e;transform:scaleX(0.9047);">Brušenje okruglo</span>
<span class="t" style="left:770.86px;top:438.87px;font-size:10.2px;line-height:13px;color:#1e1e1e;transform:scaleX(0.9300);">1</span>
<span class="t" style="left:812.50px;top:438.87px;font-size:10.2px;line-height:13px;color:#1e1e1e;transform:scaleX(0.9508);">19/Nov/2019</span>
<span class="t" style="left:886.75px;top:438.87px;font-size:10.2px;line-height:13px;color:#1e1e1e;transform:scaleX(0.9547);">19/Nov/2119</span>
<span class="t" style="left:1023.00px;top:438.87px;font-size:10.2px;line-height:13px;color:#1e1e1e;transform:scaleX(0.8968);">Manual</span>
<div style="left:1120.8px;top:454.3px;width:68.6px;height:17.2px;background:#ff8080;"></div>
<div class="ln" style="left:295.5px;top:471.5px;width:824.5px;height:1px;"></div>
<div style="left:249px;top:471.5px;width:14.5px;height:1px;background:#d3d5dc;"></div>
<svg style="left:297.5px;top:456.2px;" width="12" height="12" viewBox="0 0 12 12"><path d="M6 .500l5.500 5.500-5.500 5.500-5.500-5.500z" fill="#e6de34" stroke="#cdc55a" stroke-width=".800"/><path d="M6 2.200l3.800 3.800-3.800 3.800-3.800-3.800z" fill="#ece63e"/></svg>
<div style="left:371.9px;top:458.5px;width:10.7px;height:8.9px;background:#dfe3f3;border:1px solid #a4a7b2;box-shadow:inset 0 0 0 1.300px #f7f8fc;box-sizing:border-box;border-radius:1px;"></div>
<span class="t" style="left:316.00px;top:457.07px;font-size:10.2px;line-height:13px;color:#1e1e1e;transform:scaleX(0.9300);">3.5</span>
<span class="t" style="left:484.50px;top:457.07px;font-size:10.2px;line-height:13px;color:#1e1e1e;transform:scaleX(0.8879);">OP-0017</span>
<span class="t" style="left:567.70px;top:457.07px;font-size:10.2px;line-height:13px;color:#1e1e1e;transform:scaleX(0.9055);">Glodanje posle kaljenja</span>
<span class="t" style="left:770.86px;top:457.07px;font-size:10.2px;line-height:13px;color:#1e1e1e;transform:scaleX(0.9300);">1</span>
<span class="t" style="left:812.50px;top:457.07px;font-size:10.2px;line-height:13px;color:#1e1e1e;transform:scaleX(0.9508);">19/Nov/2019</span>
<span class="t" style="left:886.75px;top:457.07px;font-size:10.2px;line-height:13px;color:#1e1e1e;transform:scaleX(0.9547);">19/Nov/2119</span>
<span class="t" style="left:1023.00px;top:457.07px;font-size:10.2px;line-height:13px;color:#1e1e1e;transform:scaleX(0.8968);">Manual</span>
<div style="left:1120.8px;top:472.5px;width:68.6px;height:17.3px;background:#ff8080;"></div>
<div class="ln" style="left:295.5px;top:489.8px;width:824.5px;height:1px;"></div>
<div style="left:249px;top:489.8px;width:14.5px;height:1px;background:#d3d5dc;"></div>
<svg style="left:297.5px;top:474.45px;" width="12" height="12" viewBox="0 0 12 12"><path d="M6 .500l5.500 5.500-5.500 5.500-5.500-5.500z" fill="#e6de34" stroke="#cdc55a" stroke-width=".800"/><path d="M6 2.200l3.800 3.800-3.800 3.800-3.800-3.800z" fill="#ece63e"/></svg>
<div style="left:371.9px;top:476.75px;width:10.7px;height:8.9px;background:#dfe3f3;border:1px solid #a4a7b2;box-shadow:inset 0 0 0 1.300px #f7f8fc;box-sizing:border-box;border-radius:1px;"></div>
<span class="t" style="left:316.00px;top:475.32px;font-size:10.2px;line-height:13px;color:#1e1e1e;transform:scaleX(0.9300);">3.6</span>
<span class="t" style="left:484.50px;top:475.32px;font-size:10.2px;line-height:13px;color:#1e1e1e;transform:scaleX(0.8879);">OP-0013</span>
<span class="t" style="left:567.70px;top:475.32px;font-size:10.2px;line-height:13px;color:#1e1e1e;transform:scaleX(0.8303);">Žica</span>
<span class="t" style="left:770.86px;top:475.32px;font-size:10.2px;line-height:13px;color:#1e1e1e;transform:scaleX(0.9300);">1</span>
<span class="t" style="left:812.50px;top:475.32px;font-size:10.2px;line-height:13px;color:#1e1e1e;transform:scaleX(0.9508);">19/Nov/2019</span>
<span class="t" style="left:886.75px;top:475.32px;font-size:10.2px;line-height:13px;color:#1e1e1e;transform:scaleX(0.9547);">19/Nov/2119</span>
<span class="t" style="left:1023.00px;top:475.32px;font-size:10.2px;line-height:13px;color:#1e1e1e;transform:scaleX(0.8968);">Manual</span>
<div style="left:1120.8px;top:490.8px;width:68.6px;height:17.2px;background:#ff8080;"></div>
<div class="ln" style="left:295.5px;top:508px;width:824.5px;height:1px;"></div>
<div style="left:249px;top:508px;width:14.5px;height:1px;background:#d3d5dc;"></div>
<svg style="left:297.5px;top:492.7px;" width="12" height="12" viewBox="0 0 12 12"><path d="M6 .500l5.500 5.500-5.500 5.500-5.500-5.500z" fill="#e6de34" stroke="#cdc55a" stroke-width=".800"/><path d="M6 2.200l3.800 3.800-3.800 3.800-3.800-3.800z" fill="#ece63e"/></svg>
<div style="left:371.9px;top:495px;width:10.7px;height:8.9px;background:#dfe3f3;border:1px solid #a4a7b2;box-shadow:inset 0 0 0 1.300px #f7f8fc;box-sizing:border-box;border-radius:1px;"></div>
<span class="t" style="left:316.00px;top:493.57px;font-size:10.2px;line-height:13px;color:#1e1e1e;transform:scaleX(0.9300);">3.7</span>
<span class="t" style="left:484.50px;top:493.57px;font-size:10.2px;line-height:13px;color:#1e1e1e;transform:scaleX(0.8879);">OP-0007</span>
<span class="t" style="left:567.70px;top:493.57px;font-size:10.2px;line-height:13px;color:#1e1e1e;transform:scaleX(0.9074);">Montaža</span>
<span class="t" style="left:770.86px;top:493.57px;font-size:10.2px;line-height:13px;color:#1e1e1e;transform:scaleX(0.9300);">1</span>
<span class="t" style="left:812.50px;top:493.57px;font-size:10.2px;line-height:13px;color:#1e1e1e;transform:scaleX(0.9508);">19/Nov/2019</span>
<span class="t" style="left:886.75px;top:493.57px;font-size:10.2px;line-height:13px;color:#1e1e1e;transform:scaleX(0.9547);">19/Nov/2119</span>
<span class="t" style="left:1023.00px;top:493.57px;font-size:10.2px;line-height:13px;color:#1e1e1e;transform:scaleX(0.8968);">Manual</span>
<div style="left:1120.8px;top:509px;width:68.6px;height:38.2px;background:#ff8080;"></div>
<div class="ln" style="left:280px;top:547px;width:909.4px;height:1px;"></div>
<div style="left:249px;top:547px;width:14.5px;height:1px;background:#d3d5dc;"></div>
<svg style="left:297.5px;top:521.3px;" width="12" height="12" viewBox="0 0 12 12"><path d="M6 .500l5.500 5.500-5.500 5.500-5.500-5.500z" fill="#e6de34" stroke="#cdc55a" stroke-width=".800"/><path d="M6 2.200l3.800 3.800-3.800 3.800-3.800-3.800z" fill="#ece63e"/></svg>
<div style="left:371.9px;top:523.6px;width:10.7px;height:8.9px;background:#dfe3f3;border:1px solid #a4a7b2;box-shadow:inset 0 0 0 1.300px #f7f8fc;box-sizing:border-box;border-radius:1px;"></div>
<span class="t" style="left:316.00px;top:522.17px;font-size:10.2px;line-height:13px;color:#1e1e1e;transform:scaleX(0.9300);">3.8</span>
<span class="t" style="left:484.50px;top:522.17px;font-size:10.2px;line-height:13px;color:#1e1e1e;transform:scaleX(0.9028);">PT-00116</span>
<span class="t" style="left:567.70px;top:522.17px;font-size:10.2px;line-height:13px;color:#1e1e1e;transform:scaleX(0.8985);">Šipka 1.2767</span>
<span class="t" style="left:770.86px;top:522.17px;font-size:10.2px;line-height:13px;color:#1e1e1e;transform:scaleX(0.9300);">1</span>
<span class="t" style="left:812.50px;top:522.17px;font-size:10.2px;line-height:13px;color:#1e1e1e;transform:scaleX(0.9508);">05/Nov/2019</span>
<span class="t" style="left:886.75px;top:522.17px;font-size:10.2px;line-height:13px;color:#1e1e1e;transform:scaleX(0.9547);">05/Nov/2119</span>
<span class="t" style="left:951.70px;top:522.17px;font-size:10.2px;line-height:13px;color:#1e1e1e;transform:scaleX(0.8393);">BOM</span>
<span class="t" style="left:1023.00px;top:522.17px;font-size:10.2px;line-height:13px;color:#1e1e1e;transform:scaleX(0.8968);">Manual</span>
<div style="left:1120.8px;top:547.5px;width:68.6px;height:51.5px;background:#02fc02;"></div>
<div class="ln" style="left:280px;top:599px;width:909.4px;height:1px;"></div>
<div style="left:249px;top:599px;width:14.5px;height:1px;background:#d3d5dc;"></div>
<svg style="left:270px;top:571px;" width="4" height="6" viewBox="0 0 4 6"><path d="M0 0v6l3.500-3z" fill="#7d7d7d"/></svg>
<svg style="left:288.5px;top:565.7px;" width="15" height="15" viewBox="0 0 15 15"><path d="M3.500 .900h7v4.600l3.700 2 .3 4-5.600 2.700-8-6-.400-3.700 3-1.600z" fill="#e3bd1a" stroke="#5a4a0a" stroke-width="1.200" stroke-linejoin="round"/><path d="M.700 4.700l2.800-1.500v1.500l2.700 2 4.300-1.200 3.500 2-5.200 2.700z" fill="#efd244"/><path d="M3.600 1.100h4.300l2.500 1.600-4.200.2z" fill="#f2d84c"/><path d="M3.600 1.100l2.600 1.800v3.700l-2.600-2z" fill="#c29a0e"/><path d="M6.200 2.900l4.200-.2v2.800l-4.200 1.100z" fill="#e9ca2c"/><path d="M8.900 10.300l5.200-2.600.3 3.700-5.500 2.700z" fill="#f8ea80"/><path d="M.800 4.900l8.100 5.400v3.800l-7.900-5.900z" fill="#d7b016"/><path d="M3.600 1.100l2.600 1.800v3.700M.800 4.900l8.100 5.400 5.200-2.600M8.900 10.300v3.800M6.200 2.900l4.200-.2" fill="none" stroke="#7d6610" stroke-width=".700"/></svg>
<div style="left:371.9px;top:569.1px;width:10.7px;height:8.9px;background:#dfe3f3;border:1px solid #a4a7b2;box-shadow:inset 0 0 0 1.300px #f7f8fc;box-sizing:border-box;border-radius:1px;"></div>
<svg style="left:393.2px;top:567.3px;" width="15" height="13" viewBox="0 0 15 13"><rect x=".700" y=".700" width="13.400" height="11.300" rx="1" fill="#efe9c4" stroke="#4a4a4a" stroke-width="1.400"/><rect x="2.700" y="2.300" width="4.600" height="2.300" rx="1" fill="#d9d21e" stroke="#4d4d12" stroke-width=".900"/><rect x="8.800" y="2.300" width="3.300" height="2.300" rx="1" fill="#d9d21e" stroke="#4d4d12" stroke-width=".900"/><path d="M2.600 10.800l2.500-4.300 2.500 4.300z" fill="#d9d21e" stroke="#4d4d12" stroke-width=".900" stroke-linejoin="round"/><rect x="8.800" y="6.800" width="4" height="4.300" fill="#fff"/><path d="M8.600 11v-4.400h4.400" fill="none" stroke="#3a3a3a" stroke-width="1.100"/></svg>
<span class="t" style="left:316.00px;top:567.67px;font-size:10.2px;line-height:13px;color:#1e1e1e;transform:scaleX(0.9300);">4</span>
<span class="t" style="left:484.50px;top:567.67px;font-size:10.2px;line-height:13px;color:#1e1e1e;transform:scaleX(0.9196);">020951</span>
<span class="t" style="left:567.70px;top:568.57px;font-size:10.2px;line-height:13px;color:#1e1e1e;transform:scaleX(0.9167);">Umetak nepokretne</span>
<span class="t" style="left:770.86px;top:567.67px;font-size:10.2px;line-height:13px;color:#1e1e1e;transform:scaleX(0.9300);">2</span>
<span class="t" style="left:812.50px;top:567.67px;font-size:10.2px;line-height:13px;color:#1e1e1e;transform:scaleX(0.9508);">02/Nov/2019</span>
<span class="t" style="left:886.75px;top:567.67px;font-size:10.2px;line-height:13px;color:#1e1e1e;transform:scaleX(0.9547);">02/Nov/2119</span>
<span class="t" style="left:951.70px;top:567.67px;font-size:10.2px;line-height:13px;color:#1e1e1e;transform:scaleX(0.8432);">SOLIDWORKS</span>
<span class="t" style="left:1023.00px;top:567.67px;font-size:10.2px;line-height:13px;color:#1e1e1e;transform:scaleX(0.8968);">Manual</span>
<span class="t" style="left:1065.50px;top:567.67px;font-size:10.2px;line-height:13px;color:#1e1e1e;transform:scaleX(0.8746);">RN-0001</span>
<span class="t" style="left:1123.70px;top:567.67px;font-size:10.2px;line-height:13px;color:#0b520b;transform:scaleX(0.9503);">Zatvoren</span>
<div class="ln" style="left:280px;top:651.5px;width:909.4px;height:1px;"></div>
<div style="left:249px;top:651.5px;width:14.5px;height:1px;background:#d3d5dc;"></div>
<svg style="left:270px;top:623.25px;" width="4" height="6" viewBox="0 0 4 6"><path d="M0 0v6l3.500-3z" fill="#7d7d7d"/></svg>
<svg style="left:288.5px;top:617.95px;" width="15" height="15" viewBox="0 0 15 15"><path d="M3.500 .900h7v4.600l3.700 2 .3 4-5.600 2.700-8-6-.400-3.700 3-1.600z" fill="#e3bd1a" stroke="#5a4a0a" stroke-width="1.200" stroke-linejoin="round"/><path d="M.700 4.700l2.800-1.500v1.500l2.700 2 4.300-1.200 3.500 2-5.200 2.700z" fill="#efd244"/><path d="M3.600 1.100h4.300l2.500 1.600-4.200.2z" fill="#f2d84c"/><path d="M3.600 1.100l2.600 1.800v3.700l-2.600-2z" fill="#c29a0e"/><path d="M6.200 2.900l4.200-.2v2.800l-4.200 1.100z" fill="#e9ca2c"/><path d="M8.900 10.300l5.200-2.600.3 3.700-5.500 2.700z" fill="#f8ea80"/><path d="M.800 4.900l8.100 5.400v3.800l-7.900-5.900z" fill="#d7b016"/><path d="M3.600 1.100l2.600 1.800v3.700M.800 4.900l8.100 5.400 5.200-2.600M8.900 10.300v3.800M6.200 2.900l4.200-.2" fill="none" stroke="#7d6610" stroke-width=".700"/></svg>
<div style="left:371.9px;top:621.35px;width:10.7px;height:8.9px;background:#dfe3f3;border:1px solid #a4a7b2;box-shadow:inset 0 0 0 1.300px #f7f8fc;box-sizing:border-box;border-radius:1px;"></div>
<svg style="left:393.2px;top:619.55px;" width="15" height="13" viewBox="0 0 15 13"><rect x=".700" y=".700" width="13.400" height="11.300" rx="1" fill="#efe9c4" stroke="#4a4a4a" stroke-width="1.400"/><rect x="2.700" y="2.300" width="4.600" height="2.300" rx="1" fill="#d9d21e" stroke="#4d4d12" stroke-width=".900"/><rect x="8.800" y="2.300" width="3.300" height="2.300" rx="1" fill="#d9d21e" stroke="#4d4d12" stroke-width=".900"/><path d="M2.600 10.800l2.500-4.300 2.500 4.300z" fill="#d9d21e" stroke="#4d4d12" stroke-width=".900" stroke-linejoin="round"/><rect x="8.800" y="6.800" width="4" height="4.300" fill="#fff"/><path d="M8.600 11v-4.400h4.400" fill="none" stroke="#3a3a3a" stroke-width="1.100"/></svg>
<span class="t" style="left:316.00px;top:619.92px;font-size:10.2px;line-height:13px;color:#1e1e1e;transform:scaleX(0.9300);">5</span>
<span class="t" style="left:484.50px;top:619.92px;font-size:10.2px;line-height:13px;color:#1e1e1e;transform:scaleX(0.9196);">020952</span>
<span class="t" style="left:567.70px;top:620.82px;font-size:10.2px;line-height:13px;color:#1e1e1e;transform:scaleX(0.8515);">Bocni klizac 1</span>
<span class="t" style="left:770.86px;top:619.92px;font-size:10.2px;line-height:13px;color:#1e1e1e;transform:scaleX(0.9300);">2</span>
<span class="t" style="left:812.50px;top:619.92px;font-size:10.2px;line-height:13px;color:#1e1e1e;transform:scaleX(0.9508);">02/Nov/2019</span>
<span class="t" style="left:886.75px;top:619.92px;font-size:10.2px;line-height:13px;color:#1e1e1e;transform:scaleX(0.9547);">02/Nov/2119</span>
<span class="t" style="left:951.70px;top:619.92px;font-size:10.2px;line-height:13px;color:#1e1e1e;transform:scaleX(0.8432);">SOLIDWORKS</span>
<span class="t" style="left:1023.00px;top:619.92px;font-size:10.2px;line-height:13px;color:#1e1e1e;transform:scaleX(0.8968);">Manual</span>
<span class="t" style="left:1065.50px;top:619.92px;font-size:10.2px;line-height:13px;color:#1e1e1e;transform:scaleX(0.8746);">RN-0001</span>
<span class="t" style="left:1123.70px;top:619.92px;font-size:10.2px;line-height:13px;color:#1e1e1e;transform:scaleX(0.8818);">OP-0004</span>
<div class="ln" style="left:280px;top:703.3px;width:909.4px;height:1px;"></div>
<div style="left:249px;top:703.3px;width:14.5px;height:1px;background:#d3d5dc;"></div>
<svg style="left:270px;top:675.4px;" width="4" height="6" viewBox="0 0 4 6"><path d="M0 0v6l3.500-3z" fill="#7d7d7d"/></svg>
<svg style="left:288.5px;top:670.1px;" width="15" height="15" viewBox="0 0 15 15"><path d="M3.500 .900h7v4.600l3.700 2 .3 4-5.600 2.700-8-6-.400-3.700 3-1.600z" fill="#e3bd1a" stroke="#5a4a0a" stroke-width="1.200" stroke-linejoin="round"/><path d="M.700 4.700l2.800-1.500v1.500l2.700 2 4.300-1.200 3.500 2-5.200 2.700z" fill="#efd244"/><path d="M3.600 1.100h4.300l2.500 1.600-4.200.2z" fill="#f2d84c"/><path d="M3.600 1.100l2.600 1.800v3.700l-2.600-2z" fill="#c29a0e"/><path d="M6.200 2.900l4.200-.2v2.800l-4.200 1.100z" fill="#e9ca2c"/><path d="M8.900 10.300l5.200-2.600.3 3.700-5.500 2.700z" fill="#f8ea80"/><path d="M.800 4.900l8.100 5.400v3.800l-7.900-5.900z" fill="#d7b016"/><path d="M3.600 1.100l2.600 1.800v3.700M.800 4.900l8.100 5.400 5.200-2.600M8.900 10.300v3.800M6.200 2.900l4.200-.2" fill="none" stroke="#7d6610" stroke-width=".700"/></svg>
<div style="left:371.9px;top:673.5px;width:10.7px;height:8.9px;background:#dfe3f3;border:1px solid #a4a7b2;box-shadow:inset 0 0 0 1.300px #f7f8fc;box-sizing:border-box;border-radius:1px;"></div>
<svg style="left:393.2px;top:671.7px;" width="15" height="13" viewBox="0 0 15 13"><rect x=".700" y=".700" width="13.400" height="11.300" rx="1" fill="#efe9c4" stroke="#4a4a4a" stroke-width="1.400"/><rect x="2.700" y="2.300" width="4.600" height="2.300" rx="1" fill="#d9d21e" stroke="#4d4d12" stroke-width=".900"/><rect x="8.800" y="2.300" width="3.300" height="2.300" rx="1" fill="#d9d21e" stroke="#4d4d12" stroke-width=".900"/><path d="M2.600 10.800l2.500-4.300 2.500 4.300z" fill="#d9d21e" stroke="#4d4d12" stroke-width=".900" stroke-linejoin="round"/><rect x="8.800" y="6.800" width="4" height="4.300" fill="#fff"/><path d="M8.600 11v-4.400h4.400" fill="none" stroke="#3a3a3a" stroke-width="1.100"/></svg>
<span class="t" style="left:316.00px;top:672.07px;font-size:10.2px;line-height:13px;color:#1e1e1e;transform:scaleX(0.9300);">6</span>
<span class="t" style="left:484.50px;top:672.07px;font-size:10.2px;line-height:13px;color:#1e1e1e;transform:scaleX(0.9196);">020953</span>
<span class="t" style="left:567.70px;top:672.97px;font-size:10.2px;line-height:13px;color:#1e1e1e;transform:scaleX(0.8611);">Bocni klizac 2</span>
<span class="t" style="left:770.86px;top:672.07px;font-size:10.2px;line-height:13px;color:#1e1e1e;transform:scaleX(0.9300);">1</span>
<span class="t" style="left:812.50px;top:672.07px;font-size:10.2px;line-height:13px;color:#1e1e1e;transform:scaleX(0.9508);">02/Nov/2019</span>
<span class="t" style="left:886.75px;top:672.07px;font-size:10.2px;line-height:13px;color:#1e1e1e;transform:scaleX(0.9547);">02/Nov/2119</span>
<span class="t" style="left:951.70px;top:672.07px;font-size:10.2px;line-height:13px;color:#1e1e1e;transform:scaleX(0.8432);">SOLIDWORKS</span>
<span class="t" style="left:1023.00px;top:672.07px;font-size:10.2px;line-height:13px;color:#1e1e1e;transform:scaleX(0.8968);">Manual</span>
<span class="t" style="left:1065.50px;top:672.07px;font-size:10.2px;line-height:13px;color:#1e1e1e;transform:scaleX(0.8746);">RN-0001</span>
<span class="t" style="left:1123.70px;top:672.07px;font-size:10.2px;line-height:13px;color:#1e1e1e;transform:scaleX(0.9290);">Zavrseno</span>
<div style="left:1120.8px;top:704.3px;width:68.6px;height:16px;background:#ff8080;"></div>
<svg style="left:400px;top:224px" width="100" height="496" viewBox="400 224 100 496">
<defs><linearGradient id="g1" x1="0" x2="1"><stop offset="0" stop-color="#a6a9b9"/><stop offset=".45" stop-color="#8d90a2"/><stop offset="1" stop-color="#74778a"/></linearGradient><linearGradient id="g2" x1="0" y1="0" x2="0" y2="1"><stop offset="0" stop-color="#b9bdcf"/><stop offset="1" stop-color="#8f93a6"/></linearGradient><linearGradient id="g3" x1="0" x2="1"><stop offset="0" stop-color="#b9bccb"/><stop offset=".5" stop-color="#9598a8"/><stop offset="1" stop-color="#7a7d8d"/></linearGradient></defs>
<path d="M445.300 232.600l3.700-.900v11h1.400v26.500l-3.900 1.800-3.500-1.800v-26.500h2.300z" fill="url(#g1)"/>
<path d="M446.800 243v28" stroke="#9fa2b0" stroke-width=".600"/>
<circle cx="448.800" cy="268" r=".800" fill="#eeeef4"/>
<g transform="translate(446.500 303) rotate(28.200)"><rect x="-22.500" y="-2.800" width="5" height="5.600" rx="1.400" fill="#a3a7b8"/><rect x="-18.500" y="-6.200" width="29" height="12.400" rx="2" fill="url(#g2)"/><path d="M-3 -6.200v12.400" stroke="#8e92a4" stroke-width=".600"/><rect x="9.500" y="-8.300" width="10" height="16.600" fill="#969aac"/><ellipse cx="9.500" cy="0" rx="3.600" ry="8.300" fill="#969aac"/><ellipse cx="19.500" cy="0" rx="5" ry="8.300" fill="#b0b4c7"/></g>
<path d="M441.300 341.500l2.400-3.700 2.600.9 1.700-1.700 2.300 1.400 2.500 3.600v16h2.200v13.500l-4 2.600h-5.500l-5.500-2.600v-13.500h2z" fill="url(#g3)"/>
<path d="M444.600 340.500v17.500M448.600 339v18.500M451 342v15.500M440.300 358.500h14.400" stroke="#61657a" stroke-width=".900" fill="none"/>
<path d="M445.800 338.500l1.600 6 1.800-6.500z" fill="#d8dbe8"/>
<path d="M441.500 360v12" stroke="#c5c8d8" stroke-width=".800"/>
<path d="M421.500 515.600l48.500 21.400" stroke="#948e85" stroke-width="4.200" stroke-linecap="round"/>
<path d="M421.800 515l48.200 21.200" stroke="#d2cec5" stroke-width="1.400" stroke-linecap="round"/>
<path d="M421.500 516.600l48.500 21.400" stroke="#6f6a60" stroke-width=".500" stroke-dasharray="1.500 2"/>
<path d="M440 560v22.800c0 1 .8 1.500 1.700 1.700v4c1.600 2.300 9.100 2.300 10.700 0v-4c.9-.2 2-.7 2-1.700v-22.800z" fill="url(#g1)"/>
<path d="M441.700 584.500c3 1.500 7.700 1.500 10.700 0" stroke="#666a7e" stroke-width=".700" fill="none"/>
<ellipse cx="447.200" cy="559.800" rx="8.500" ry="4.800" fill="#d6daee" stroke="#a3a7ba" stroke-width=".700"/>
<g fill="none" stroke="#96969d" stroke-width=".700"><path d="M426.700 623.300l25.800-15.800 10.800 6.700-24.100 15.800zM426.700 623.300v8.500M439.200 630l1.600 15 26.700-15.800-4.200-15"/><path d="M425.800 634.200v3.300l14.200 7.500M425.800 634.200l14.400 7.500"/><circle cx="437.500" cy="622.500" r="2"/><circle cx="451" cy="614.500" r="2"/><circle cx="446" cy="636" r="1.300"/><circle cx="458.500" cy="628.500" r="1.300"/><path d="M452 621v14M456 618v4" stroke-dasharray="1 1.200"/></g>
<path d="M437.500 630.500l.8 3M453.500 635.500v2M440.500 641v2.500" stroke="#55555c" stroke-width="1.300" fill="none"/>
<path d="M438.500 614l4 2.500M440.500 613v4" stroke="#6a6ad0" stroke-width=".800" fill="none"/>
<g fill="none" stroke="#96969d" stroke-width=".700"><path d="M429.200 677.500l28.300-15.800 10.800 5.800-25 14.200zM429.200 677.500l-5 10.800.8 2.500 15.800 5.900 5-3.400M443.300 681.700l2.500 11.600M468.300 667.500v5"/><path d="M424.200 688.300l16.600 6"/><circle cx="440" cy="675.800" r="2.800"/><circle cx="454.200" cy="667.500" r="2.600"/></g>
<path d="M444.500 682v6.500l2.500 1.500v4M448.500 680.500v8M457.500 677v7.500l3 1.500M462 675v6M467 673.500v7l-1.500 1" stroke="#5a5a62" stroke-width="1" fill="none"/>
<path d="M439.500 666l1.500 1.200" stroke="#6a6ad0" stroke-width=".800" fill="none"/>
<path d="M439 720.500l10.200-6.300 10.500 6.300z" fill="#bcc1ec"/>
</svg>
<svg style="left:0;top:0" width="1280" height="720" viewBox="0 0 1280 720">
<polygon points="222.89,80.59 412.18,217.14 404.25,228.13 441.70,234.00 424.32,200.32 416.39,211.31 227.11,74.75" fill="#ff0000"/>
<polygon points="222.94,138.39 337.90,218.35 330.16,229.48 367.70,234.70 349.75,201.32 342.01,212.44 227.06,132.47" fill="#ff0000"/>
<polygon points="222.84,194.32 255.12,218.57 246.98,229.41 284.30,236.00 267.58,201.98 259.44,212.82 227.16,188.56" fill="#ff0000"/>
<polygon points="1184.59,137.62 1163.51,170.34 1152.04,162.95 1147.70,200.60 1180.20,181.09 1168.72,173.70 1189.81,140.98" fill="#ff0000"/>
<polygon points="225.00,454.70 257.70,454.70 257.70,468.30 291.70,451.40 257.70,434.50 257.70,448.10 225.00,448.10" fill="#ff0000"/>
<polygon points="225.00,530.50 257.70,530.50 257.70,544.10 291.70,527.20 257.70,510.30 257.70,523.90 225.00,523.90" fill="#ff0000"/>
</svg>
<div class="bl" style="left:0px;top:58px;width:231px;height:44.6px;"></div>
<span class="t b" style="left:51.00px;top:63.94px;font-size:27px;line-height:35px;color:#fff;font-weight:bold;transform:scaleX(1.0155);">Slika dela</span>
<div class="bl" style="left:0px;top:115.3px;width:231px;height:44.3px;"></div>
<span class="t b" style="left:81.60px;top:120.64px;font-size:27px;line-height:35px;color:#fff;font-weight:bold;">Crtež</span>
<div class="bl" style="left:0px;top:171px;width:231px;height:44.6px;"></div>
<span class="t b" style="left:51.80px;top:177.14px;font-size:27px;line-height:35px;color:#fff;font-weight:bold;transform:scaleX(1.0492);">3D model</span>
<div class="bl" style="left:0px;top:408px;width:231px;height:85.8px;"></div>
<span class="t b" style="left:39.80px;top:414.44px;font-size:27px;line-height:35px;color:#fff;font-weight:bold;transform:scaleX(1.0066);">Tehnološke</span>
<span class="t b" style="left:54.80px;top:453.44px;font-size:27px;line-height:35px;color:#fff;font-weight:bold;transform:scaleX(1.0206);">operacije</span>
<div class="bl" style="left:0px;top:504.5px;width:231px;height:44.3px;"></div>
<span class="t b" style="left:14.80px;top:510.64px;font-size:27px;line-height:35px;color:#fff;font-weight:bold;transform:scaleX(1.0589);">Repromaterijal</span>
<div class="bl" style="left:436.3px;top:58.2px;width:596.5px;height:55.3px;"></div>
<span class="t b" style="left:495.80px;top:65.11px;font-size:32px;line-height:42px;color:#fff;font-weight:bold;transform:scaleX(0.9891);">Sastavnica alata iz konstrukcije</span>
<div class="bl" style="left:1091px;top:58.1px;width:189px;height:84.4px;"></div>
<span class="t b" style="left:1101.20px;top:70.13px;font-size:22.7px;line-height:30px;color:#fff;font-weight:bold;transform:scaleX(1.0118);">Status nabavke</span>
<span class="t b" style="left:1112.00px;top:101.43px;font-size:22.7px;line-height:30px;color:#fff;font-weight:bold;transform:scaleX(1.0465);">i proizvodnje</span>
</div></body></html>
